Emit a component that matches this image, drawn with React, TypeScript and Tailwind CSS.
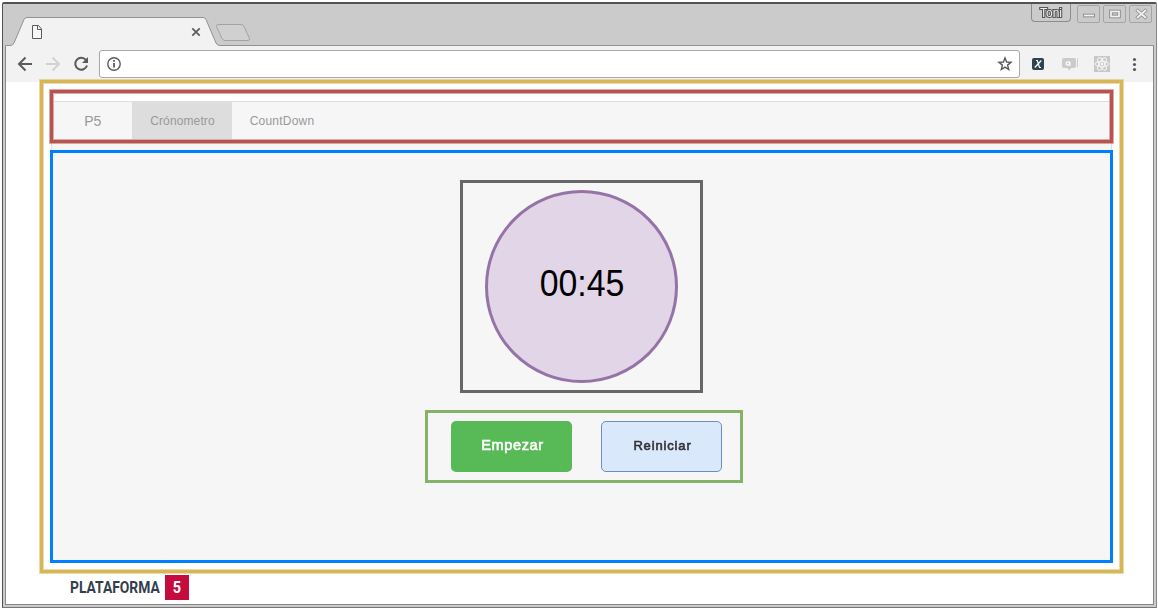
import React from "react";

const textFont = "font-['Liberation_Sans',Arial,sans-serif]";

function TabStrip() {
  return (
    <div className="relative flex h-[42px] w-full items-start">
      <svg className="absolute left-[2px] top-0" width="1151" height="42" viewBox="5 4 1151 42">
        <path d="M5.5 45.5 H10 Q13 45.500 14 43 L24 19.500 Q25 17.500 27 17.500 H203 Q205 17.500 206 19.500 L216 43 Q217 45.500 220 45.500 H1153.500 V48 H5.500 Z" fill="#f2f2f2" stroke="#929292" />
        <path d="M219 24.500 H241 Q243 24.500 244 26.500 L249.500 38.500 Q250 40.500 248 40.500 H225 Q223 40.500 222 38.500 L216.500 26.500 Q216 24.500 219 24.500 Z" fill="#d0d0d0" stroke="#a3a3a3" />
        <path d="M32.500 25.500 H38.500 L41.500 29 V38.500 H32.500 Z" fill="#f7f7f7" stroke="#5a5a5a" />
        <path d="M37.500 25.500 V29.500 H41.500" fill="none" stroke="#5a5a5a" />
        <path d="M192.300 28.300 L199.700 35.700 M199.700 28.300 L192.300 35.700" stroke="#5a5a5a" strokeWidth="1.700" />
      </svg>
      <div className="relative ml-auto flex gap-[2px] pr-[2px]">
        <div className="mr-[4px] h-[18px] w-[40px] rounded-b-[4px] border border-t-0 border-[#8c8c8c] bg-[#cbcbcb] text-center text-[12px] leading-[19px] text-[#eeeeee] opacity-[.99] will-change-transform [-webkit-text-stroke:2.200px_#555] [paint-order:stroke_fill]">
          Toni
        </div>
        <svg className="mt-px" width="77" height="18" viewBox="1077 5 77 18" fill="none">
          <g stroke="#a4a4a4">
            <rect x="1077.500" y="5.500" width="22" height="17" rx="1.500" />
            <rect x="1103.500" y="5.500" width="22" height="17" rx="1.500" />
            <rect x="1129.500" y="5.500" width="22" height="17" rx="1.500" />
          </g>
          <g stroke="#8d8d8d" strokeWidth="3.600">
            <path d="M1083 15.500 H1095" />
            <rect x="1111" y="11.500" width="8" height="5" />
            <path d="M1136.500 9.500 L1146.500 18.500 M1146.500 9.500 L1136.500 18.500" />
          </g>
          <g stroke="#f2f2f2" strokeWidth="1.700">
            <path d="M1084 15.500 H1094" />
            <rect x="1111" y="11.500" width="8" height="5" />
            <path d="M1137 10 L1146 18 M1146 10 L1137 18" />
          </g>
        </svg>
      </div>
    </div>
  );
}

function Toolbar() {
  return (
    <div className="flex h-[36px] w-[1147px] items-start bg-[#f2f2f2] pt-[4px]">
      <svg className="mt-[6px]" width="93" height="16" viewBox="6 56 93 16" fill="none" strokeWidth="2">
        <path d="M32 64 H19.500 M25.500 57.500 L19 64 L25.500 70.500" stroke="#5a5a5a" />
        <path d="M46 64 H58.500 M52.500 57.500 L59 64 L52.500 70.500" stroke="#d2d2d2" />
        <path d="M86 60 A6 6 0 1 0 87 65.500" stroke="#5a5a5a" />
        <path d="M88 57 V63 H82 Z" fill="#5a5a5a" />
      </svg>
      <div className="flex h-[28px] w-[921px] items-center justify-between rounded-[3px] border border-[#a8a8a8] bg-white pl-[7px] pr-[6px]">
        <svg width="14" height="14" viewBox="0 0 14 14" fill="none" stroke="#5a5a5a">
          <circle cx="7" cy="7" r="6.200" strokeWidth="1.400" />
          <path d="M7 6 V10.500 M7 3 V4.800" strokeWidth="1.800" />
        </svg>
        <svg width="16" height="16" viewBox="0 0 16 16" fill="none" stroke="#5a5a5a" strokeWidth="1.400">
          <path d="M8 2 L9.600 6 L14 6.300 L10.600 9.100 L11.700 13.500 L8 11.100 L4.300 13.500 L5.400 9.100 L2 6.300 L6.400 6 Z" />
        </svg>
      </div>
      <svg className="mt-[4px]" width="130" height="20" viewBox="1020 54 130 20" fill="none">
        <rect x="1032" y="58" width="12" height="12" rx="2" fill="#2d4350" />
        <path d="M1036 60.500 H1037.300 L1039.500 67.500 H1041 M1041.300 60.500 L1034.800 67.500" stroke="#fff" strokeWidth="1.200" />
        <path d="M1064 58 H1074 Q1076 58 1076 60 V66 Q1076 68 1074 68 H1071 L1069.500 70.500 L1067 68 H1064 Q1062 68 1062 66 V60 Q1062 58 1064 58 Z" fill="#cbcbcb" />
        <path d="M1077.500 58 V67" stroke="#d0d0d0" />
        <circle cx="1067.800" cy="63.500" r="1.700" stroke="#fff" strokeWidth="1.200" />
        <path d="M1070 61.500 V66" stroke="#fff" />
        <rect x="1094" y="56" width="16" height="16" fill="#c8c8c8" />
        <g stroke="#fafafa" strokeWidth=".9">
          <ellipse cx="1102" cy="64" rx="7" ry="2.700" />
          <ellipse cx="1102" cy="64" rx="7" ry="2.700" transform="rotate(60 1102 64)" />
          <ellipse cx="1102" cy="64" rx="7" ry="2.700" transform="rotate(120 1102 64)" />
        </g>
        <circle cx="1102" cy="64" r="1.200" fill="#fff" />
        <g fill="#5a5a5a">
          <circle cx="1134.500" cy="59.500" r="1.600" />
          <circle cx="1134.500" cy="64.500" r="1.600" />
          <circle cx="1134.500" cy="69.500" r="1.600" />
        </g>
      </svg>
    </div>
  );
}

function Navigation() {
  return (
    <nav className="relative z-10 mt-[7px] h-[53px] w-[1063px] border-[3px] border-[#b85450] px-px pt-[8px] shadow-[0_0_0_1px_rgba(184,84,80,.5),inset_0_0_0_1px_rgba(184,84,80,.5)]">
      <div className="flex h-[38px] border-t border-[#dddddd] bg-[#f6f6f6] text-[12px] text-[#999999]">
        <div className="w-[77.500px] pt-[11px] text-center text-[14px] leading-[17px]">P5</div>
        <div className="-mt-px w-[100px] bg-[#dddddd] pl-[2px] pt-[13px] text-center leading-[15px] tracking-[0.120px]">Crónometro</div>
        <div className="w-[101px] pt-[12px] text-center leading-[15px] tracking-[0.220px]">CountDown</div>
      </div>
    </nav>
  );
}

function Timer() {
  return (
    <section className="flex h-[413px] w-[1063px] flex-col items-center border-[3px] border-[#007fff] bg-[#f6f6f6] pt-[27px]">
      <div className="flex h-[213px] w-[243px] items-center justify-center border-[3px] border-[#666666]">
        <div className="flex h-[193px] w-[193px] items-center justify-center rounded-full border-[3px] border-[#9673a6] bg-[#e1d5e7] pb-[6px] pl-[1px] text-[36px] leading-none text-black">
          <span className="inline-block scale-x-[.94]">00:45</span>
        </div>
      </div>
      <div className="ml-[5px] mt-[17px] flex h-[73px] w-[318px] gap-[29px] border-[3px] border-[#82b366] pl-[23px] pt-[8px]">
        <button className="h-[51px] w-[121px] rounded-[5px] bg-[#58b957] pb-px pl-[2px] text-[14.500px] tracking-[0.650px] text-white will-change-transform [-webkit-text-stroke:0.600px_white]">Empezar</button>
        <button className="h-[51px] w-[121px] rounded-[5px] border border-[#6c8ebf] bg-[#dae8fc] pb-[2px] pl-[2px] text-[13px] tracking-[0.850px] text-[#333333] will-change-transform [-webkit-text-stroke:0.600px_#333]">Reiniciar</button>
      </div>
    </section>
  );
}

export default function App() {
  return (
    <div className={`h-[609px] w-[1158px] overflow-hidden bg-white pl-[2px] pt-[2px] ${textFont}`}>
      <div className="h-[606px] w-[1155px] rounded-t-[2px] border border-t-2 border-[#525252] border-b-[#777777] border-r-[#888888] bg-[#cbcbcb]">
        <TabStrip />
        <div className="ml-[2px] h-[559px] w-[1149px] border border-t-0 border-[#888888] bg-white">
          <Toolbar />
          <main className="relative z-10 -mt-[2px] ml-[34px] h-[493px] w-[1083px] border-[3px] border-[#d6b656] pl-[7px] shadow-[0_0_0_1px_rgba(214,182,86,.5),inset_0_0_0_1px_rgba(214,182,86,.5)]">
            <Navigation />
            <div className="ml-px h-[7px] w-[1061px] border-x border-[#dddddd] bg-[#f6f6f6]" />
            <Timer />
          </main>
          <footer className="ml-[64px] mt-[2px] flex h-[25px] items-center">
            <div className="w-[95px] font-['Roboto',sans-serif] text-[17px] font-bold leading-[25px] text-[#333f4d]">
              <span className="inline-block origin-left scale-x-[.815]">PLATAFORMA</span>
            </div>
            <div className="h-[25px] w-[24px] bg-[#c60c3f] text-center font-['Roboto',sans-serif] text-[17px] font-bold leading-[25px] text-white">
              <span className="inline-block scale-x-[.85]">5</span>
            </div>
          </footer>
        </div>
      </div>
    </div>
  );
}
